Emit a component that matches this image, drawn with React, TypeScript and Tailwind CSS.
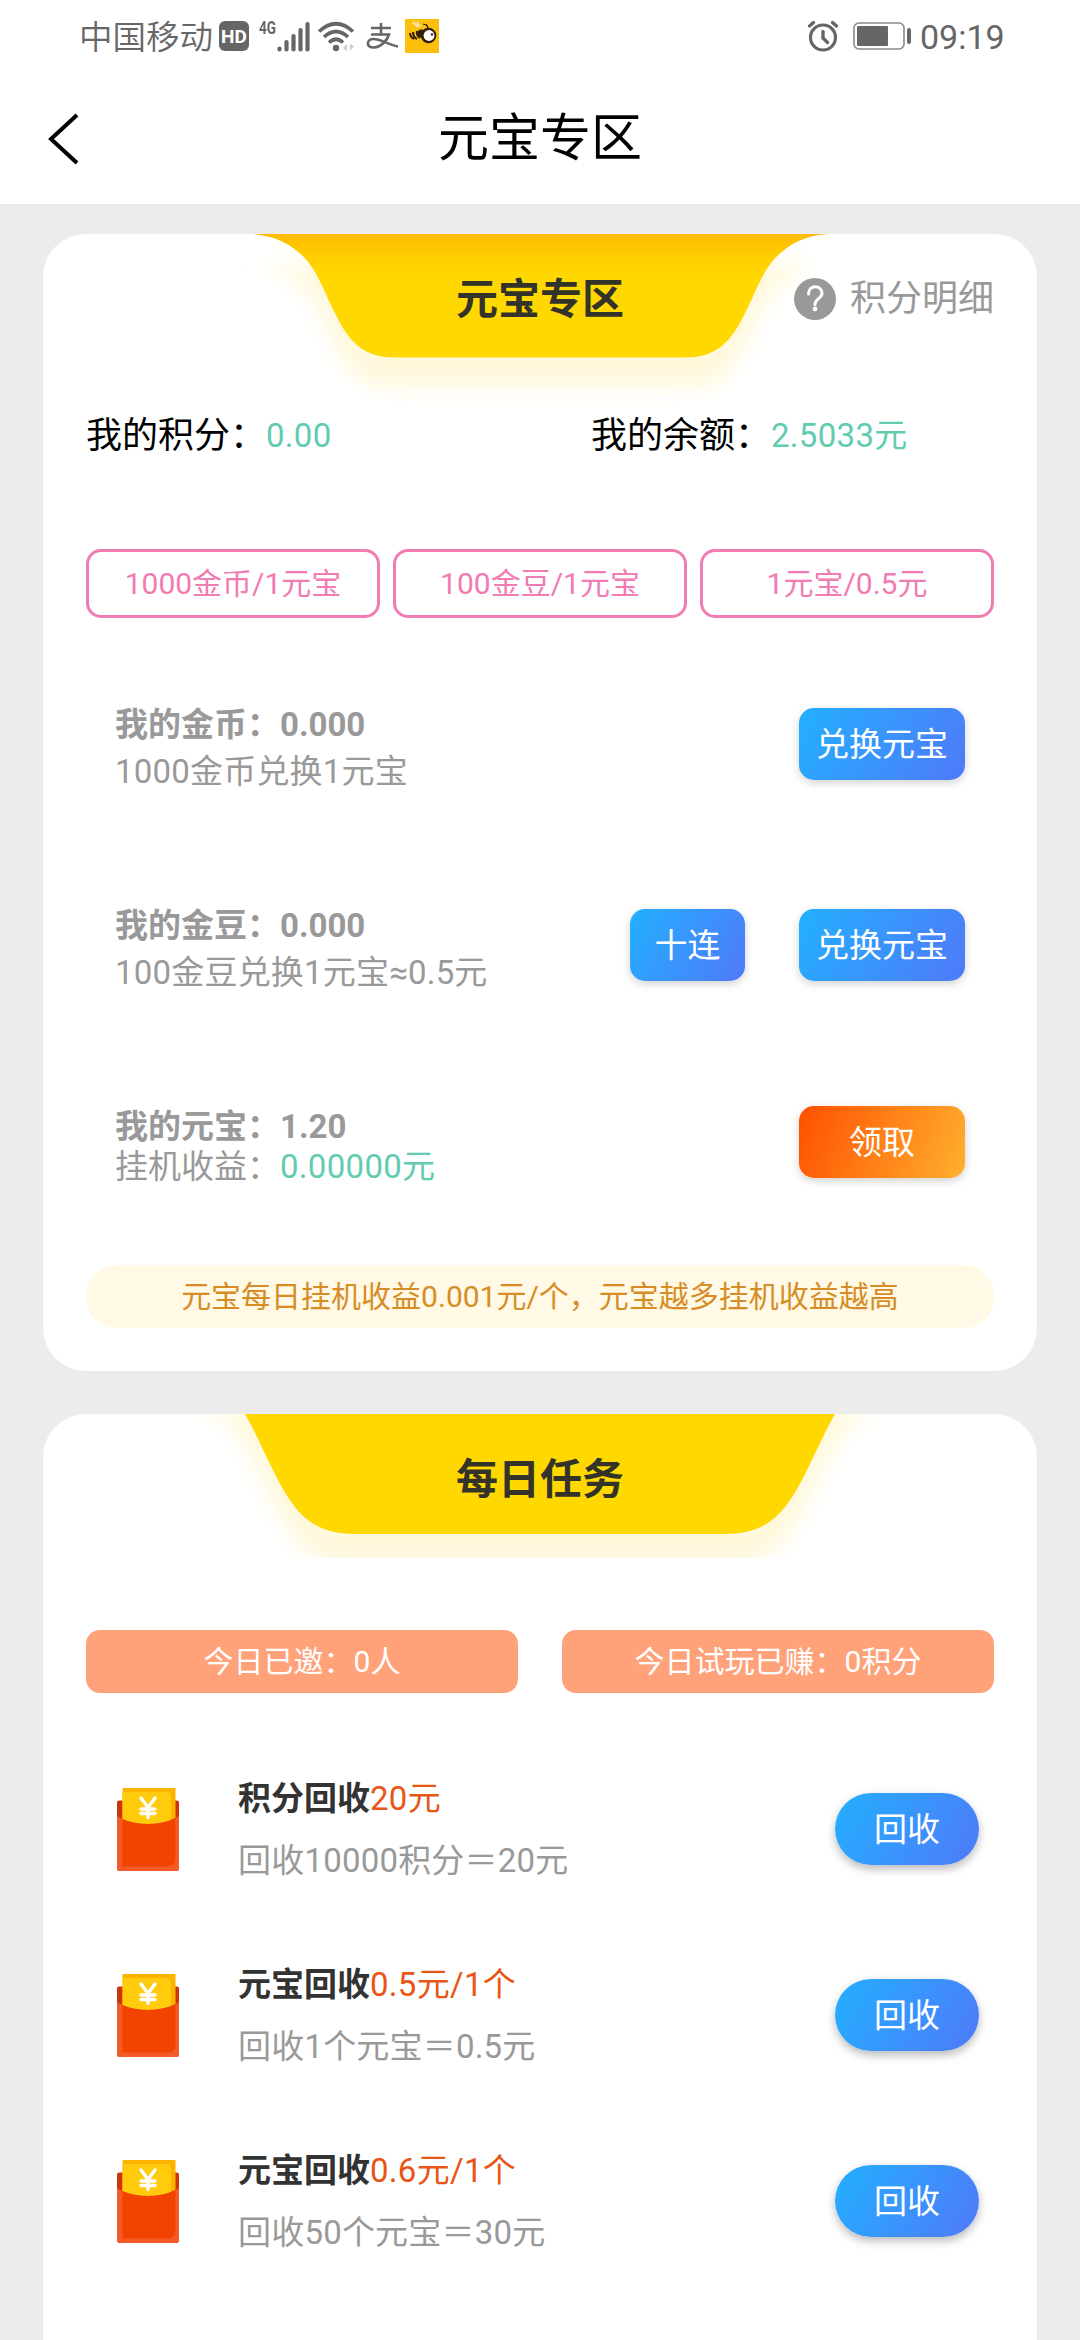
import React from "react";

const stats = ["1000金币/1元宝", "100金豆/1元宝", "1元宝/0.5元"];

const tasks = [
	{ id: 1, name: "积分回收", reward: "20元", desc: "回收10000积分＝20元" },
	{ id: 2, name: "元宝回收", reward: "0.5元/1个", desc: "回收1个元宝＝0.5元" },
	{ id: 3, name: "元宝回收", reward: "0.6元/1个", desc: "回收50个元宝＝30元" },
];

function StatusBar() {
	return (
		<div className="flex h-[72px] items-center justify-between pl-[79px] pr-[77px] text-[#666666]">
			<div className="flex items-center">
				<span className="w-[134px] whitespace-nowrap pt-[3px] text-[33.5px] leading-[40px] font-[350]">
					中国移动
				</span>
				<span className="ml-[6px] flex h-[30px] w-[30px] items-center justify-center rounded-[6px] bg-[#666666] text-[19px] font-bold leading-none text-white">
					HD
				</span>
				<div className="ml-[10px] flex h-[34px] w-[51px]">
					<span className="-mt-[3px] w-[18px] origin-left scale-x-[0.72] whitespace-nowrap text-[19px] font-bold leading-[24px]">
						4G
					</span>
					<svg className="h-[34px] w-[33px]" viewBox="18 0 33 34">
						<path
							d="M20.500 30.500v-1M27.500 30.500V23M34.500 30.500V17M41.500 30.500V11M48.500 30.500V5"
							stroke="#666666"
							strokeWidth="4.2"
							strokeLinecap="round"
						/>
					</svg>
				</div>
				<svg className="ml-[7px] h-[34px] w-[40px]" viewBox="0 0 40 34">
					<g fill="none" stroke="#666666" strokeWidth="3.6">
						<path d="M2 12.500Q19 -3 36 12.500" />
						<path d="M7 18Q19 7 31 18" />
						<path d="M12 23.500Q19 17 26 23.500" />
					</g>
					<circle cx="19" cy="29" r="3.200" fill="#666666" />
					<path d="M30 25v7l-4-3zM33 25v7l4-5z" fill="#cccccc" />
				</svg>
				<svg className="ml-[8px] h-[34px] w-[34px]" viewBox="0 0 34 34">
					<path
						d="M6 9H26M16 4v11M6 15.500H24C22 22 16 28 9 28.500C1 29 1 20.500 8 20C15 19.500 22 25.500 33 27.500"
						fill="none"
						stroke="#666666"
						strokeWidth="2.600"
					/>
				</svg>
				<svg className="ml-[6px] h-[34px] w-[34px]" viewBox="0 0 34 34">
					<rect width="34" height="34" fill="#fbbf0e" />
					<path d="M8 3l5 5M12 3l3 5" stroke="#f8df92" strokeWidth="2.500" />
					<path d="M18 5q4 0 5 4M21 5q2 1 2 5" fill="none" stroke="#33200c" />
					<path
						d="M5 14q0 4 4 6M8 13q0 5 4 7M12 12q-1 4 3 7"
						fill="none"
						stroke="#33200c"
						strokeWidth="2"
					/>
					<circle cx="16.500" cy="14.500" r="4" fill="#33200c" />
					<circle cx="23.500" cy="16.500" r="7.800" fill="#33200c" />
					<circle cx="24" cy="16.500" r="5.400" fill="white" />
					<circle cx="27" cy="15.500" r="1.200" fill="#33200c" />
				</svg>
			</div>
			<div className="flex items-center">
				<svg className="h-[32px] w-[32px]" viewBox="0 0 32 32">
					<g fill="none" stroke="#666666" strokeLinecap="round">
						<circle cx="16" cy="17.500" r="12.500" strokeWidth="3.200" />
						<path d="M16 11.500V18L20.500 22.500" strokeWidth="3.400" />
						<path d="M2.500 6L6.500 2.500M29.500 6L25.500 2.500" strokeWidth="3.400" />
					</g>
				</svg>
				<svg className="ml-[14px] h-[28px] w-[58px]" viewBox="0 0 58 28">
					<rect
						x="1"
						y="1"
						width="50"
						height="26"
						rx="5"
						fill="none"
						stroke="#888888"
						strokeWidth="1.600"
					/>
					<rect x="4" y="4" width="31" height="20" rx="1" fill="#666666" />
					<rect x="54" y="6" width="4" height="16" rx="2" fill="#666666" />
				</svg>
				<span className="ml-[9px] w-[83px] whitespace-nowrap pt-[2px] text-[34px] leading-none">
					09:19
				</span>
			</div>
		</div>
	);
}

function NavBar() {
	return (
		<div className="relative flex h-[132px] items-center justify-center">
			<svg className="absolute left-[44px] top-[40px] h-[54px] w-[38px]" viewBox="0 0 38 54">
				<path d="M33 3L7 27L33 51" fill="none" stroke="black" strokeWidth="4" />
			</svg>
			<h1 className="text-[51px] leading-none text-black">元宝专区</h1>
		</div>
	);
}

// The yellow tab hanging from the top edge of a card, with its soft glow below
function TitleTab({
	id,
	path,
	height,
	shaded,
	title,
}: {
	id: string;
	path: string;
	height: number;
	shaded?: boolean;
	title: string;
}) {
	return (
		<>
			<svg
				className="absolute left-0 top-0 w-[994px] overflow-hidden"
				height={height}
				viewBox={`0 0 994 ${height}`}
			>
				<defs>
					<filter id={`${id}-blur`} x="-10%" y="-30%" width="120%" height="180%">
						<feGaussianBlur stdDeviation="10" />
					</filter>
					<linearGradient id={`${id}-fill`} gradientUnits="userSpaceOnUse" x1="0" y1="0" x2="0" y2="42">
						<stop offset="0" stopColor={shaded ? "#ffbb00" : "#ffd800"} />
						<stop offset="0.45" stopColor={shaded ? "#ffca00" : "#ffd800"} />
						<stop offset="1" stopColor="#ffd800" />
					</linearGradient>
				</defs>
				<path
					d={path}
					transform="translate(0 31)"
					fill="#fff8db"
					filter={`url(#${id}-blur)`}
				/>
				<path d={path} fill={`url(#${id}-fill)`} />
			</svg>
			<h2 className="relative pt-[45px] text-center text-[42px] font-bold leading-[42px] text-[#333329]">
				{title}
			</h2>
		</>
	);
}

function BlueButton({ label, wide }: { label: string; wide?: boolean }) {
	return (
		<button
			className={`h-[72px] rounded-[15px] bg-linear-[120deg,#22b0ff,#5079f9] text-[33px] leading-none text-white shadow-[0_3px_8px_rgba(0,0,0,0.18)] ${
				wide ? "w-[166px]" : "w-[115px]"
			}`}
		>
			{label}
		</button>
	);
}

function RedPacket() {
	return (
		<svg className="h-[83px] w-[62px]" viewBox="0 0 62 83">
			<rect y="12.500" width="62" height="40" rx="2" fill="#cb350b" />
			<rect x="5.500" width="53" height="50" fill="#fbb300" />
			<path d="M5.500 4H49q5 0 5 5V50H5.500z" fill="#ffcb0c" />
			<path
				d="M24 10l7 9.500 7-9.500M31 19.500v10M24 21h14M24 25.500h14"
				fill="none"
				stroke="white"
				strokeWidth="3.400"
				strokeLinecap="round"
			/>
			<path d="M0 28Q12 36 31 36T62 28V81q0 2-2 2H2q-2 0-2-2z" fill="#f35a27" />
			<path d="M5.500 31Q16 36 31 36T58.500 30V71q0 7-7 7.500H5.500z" fill="#f24400" />
		</svg>
	);
}

export default function App() {
	return (
		<div className="h-[2340px] w-[1080px] overflow-hidden bg-[#ececec] font-[Roboto,'Noto_Sans_CJK_SC',sans-serif]">
			<header className="h-[204px] bg-white">
				<StatusBar />
				<NavBar />
			</header>

			<section className="relative mx-[43px] mt-[30px] h-[1137px] rounded-[43px] bg-white">
				<TitleTab
					id="zone"
					path="M208 0C240 1 262 20 272 38C280 52 285 66 294 83C308 112 325 123.500 352 123.500H642C669 123.500 686 112 700 83C709 66 714 52 722 38C732 20 754 1 786 0Z"
					height={200}
					shaded
					title="元宝专区"
				/>
				<div className="absolute right-[43px] top-[43px] flex items-center text-[#999999]">
					<svg className="mr-[14px] h-[42px] w-[42px]" viewBox="0 0 42 42">
						<circle cx="21" cy="21" r="21" fill="#999999" />
						<path
							d="M14.500 16C14.500 6.500 28 6.500 28 15.500C28 20.500 21 20.500 21 26.500"
							fill="none"
							stroke="white"
							strokeWidth="3"
							strokeLinecap="round"
						/>
						<circle cx="21" cy="31" r="2.400" fill="white" />
					</svg>
					<span className="pt-[1px] text-[36px] leading-[42px]">积分明细</span>
				</div>

				<div className="mt-[88px] grid h-[48px] grid-cols-2 items-center px-[43px] text-[36px] text-black">
					<div className="flex items-center whitespace-nowrap">
						我的积分：
						<span className="text-[33px] tracking-[0.3px] text-[#62cbb0]">0.00</span>
					</div>
					<div className="ml-[51px] flex items-center whitespace-nowrap">
						我的余额：
						<span className="text-[33px] tracking-[0.3px] text-[#62cbb0]">2.5033元</span>
					</div>
				</div>

				<div className="mt-[92px] flex gap-[13px] px-[43px]">
					{stats.map((item) => (
						<div
							key={item}
							className="flex h-[69px] flex-1 items-center justify-center rounded-[15px] border-[3px] border-[#f17bb3] text-[30px] leading-none text-[#f17bb3]"
						>
							{item}
						</div>
					))}
				</div>

				<div className="mt-[90px] flex h-[72px] justify-between pl-[72px] pr-[72px] text-[33px] leading-[47px] text-[#999999]">
					<div className="-mt-[7px]">
						<div className="font-bold">我的金币：0.000</div>
						<div className="tracking-[0.2px]">1000金币兑换1元宝</div>
					</div>
					<BlueButton label="兑换元宝" wide />
				</div>

				<div className="mt-[129px] flex h-[72px] justify-between pl-[72px] pr-[72px] text-[33px] leading-[47px] text-[#999999]">
					<div className="-mt-[7px]">
						<div className="font-bold">我的金豆：0.000</div>
						<div className="tracking-[0.2px]">100金豆兑换1元宝≈0.5元</div>
					</div>
					<div className="flex gap-[54px]">
						<BlueButton label="十连" />
						<BlueButton label="兑换元宝" wide />
					</div>
				</div>

				<div className="mt-[125px] flex h-[72px] justify-between pl-[72px] pr-[72px] text-[33px] leading-[40px] text-[#999999]">
					<div className="pt-[1px]">
						<div className="font-bold">我的元宝：1.20</div>
						<div>
							挂机收益：<span className="tracking-[0.3px] text-[#62cbb0]">0.00000元</span>
						</div>
					</div>
					<button className="h-[72px] w-[166px] rounded-[15px] bg-linear-[110deg,#ff5000,#ffb02e] text-[33px] leading-none text-white shadow-[0_3px_8px_rgba(0,0,0,0.18)]">
						领取
					</button>
				</div>

				<div className="mx-[43px] mt-[87px] flex h-[63px] items-center justify-center rounded-[30px] bg-[#fff9e6] text-[30px] leading-none text-[#d68d25]">
					元宝每日挂机收益0.001元/个，元宝越多挂机收益越高
				</div>
			</section>

			<section className="relative mx-[43px] mt-[43px] h-[1100px] overflow-hidden rounded-[43px] bg-white">
				<TitleTab
					id="daily"
					path="M140 -36C178 -34 190 -20 202 0C212 17 220 36 229 54C250 97 267 120 312 120H682C727 120 744 97 765 54C774 36 782 17 792 0C804 -20 816 -34 854 -36Z"
					height={144}
					title="每日任务"
				/>
				<div className="mt-[129px] flex gap-[44px] px-[43px]">
					{["今日已邀：0人", "今日试玩已赚：0积分"].map((item) => (
						<div
							key={item}
							className="flex h-[63px] flex-1 items-center justify-center rounded-[14px] bg-[#ffa27a] pt-[1px] text-[30px] leading-none text-white"
						>
							{item}
						</div>
					))}
				</div>

				<div className="mt-[43px]">
					{tasks.map((task) => (
						<div key={task.id} className="flex h-[186px] items-center pl-[74px] pr-[58px]">
							<RedPacket />
							<div className="ml-[59px] flex-1 pt-[2px] text-[33px] leading-[62px]">
								<div className="text-[#e85514]">
									<span className="font-bold text-[#333333]">{task.name}</span>
									<span className="tracking-[0.3px]">{task.reward}</span>
								</div>
								<div className="tracking-[0.2px] text-[#999999]">{task.desc}</div>
							</div>
							<button className="h-[72px] w-[144px] rounded-full bg-linear-[120deg,#22b0ff,#5079f9] text-[33px] leading-none text-white shadow-[0_4px_10px_rgba(0,0,0,0.28)]">
								回收
							</button>
						</div>
					))}
				</div>
			</section>
		</div>
	);
}
